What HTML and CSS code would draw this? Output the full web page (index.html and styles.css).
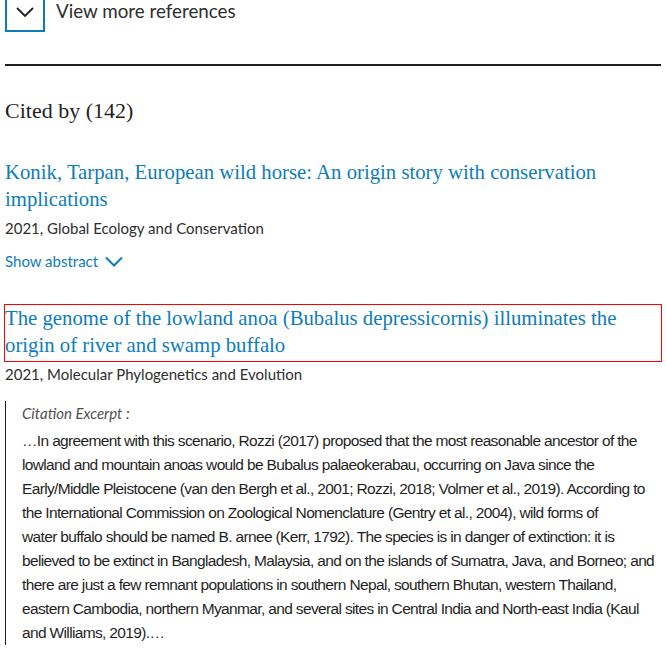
FILE: index.html
```html
<!DOCTYPE html>
<html>
<head>
<meta charset="utf-8">
<link rel="stylesheet" href="styles.css">
</head>
<body>
<div class="page">
  <div class="more">
    <button class="more-btn" aria-label="View more references">
      <svg width="18" height="10" viewBox="0 0 18 10"><path d="M1 1 L9 9 L17 1" fill="none" stroke="#1f1f1f" stroke-width="1.8"/></svg>
    </button>
    <span class="more-label">View more references</span>
  </div>
  <hr class="rule">
  <h2 class="cited">Cited by (142)</h2>
  <ul class="list">
    <li class="item">
      <a class="title" href="#">Konik, Tarpan, European wild horse: An origin story with conservation implications</a>
      <div class="meta">2021, Global Ecology and Conservation</div>
      <div class="abstract">Show abstract
        <svg width="18" height="11" viewBox="0 0 18 11"><path d="M1 1.5 L9 9.5 L17 1.5" fill="none" stroke="#0c7dbb" stroke-width="2"/></svg>
      </div>
    </li>
    <li class="item">
      <a class="title focused" href="#">The genome of the lowland anoa (Bubalus depressicornis) illuminates the origin of river and swamp buffalo</a>
      <div class="meta">2021, Molecular Phylogenetics and Evolution</div>
      <blockquote class="excerpt">
        <div class="ex-label">Citation Excerpt :</div>
        <p class="ex-text">…In agreement with this scenario, Rozzi (2017) proposed that the most reasonable ancestor of the<br>lowland and mountain anoas would be Bubalus palaeokerabau, occurring on Java since the<br>Early/Middle Pleistocene (van den Bergh et al., 2001; Rozzi, 2018; Volmer et al., 2019). According to<br>the International Commission on Zoological Nomenclature (Gentry et al., 2004), wild forms of<br>water buffalo should be named B. arnee (Kerr, 1792). The species is in danger of extinction: it is<br>believed to be extinct in Bangladesh, Malaysia, and on the islands of Sumatra, Java, and Borneo; and<br>there are just a few remnant populations in southern Nepal, southern Bhutan, western Thailand,<br>eastern Cambodia, northern Myanmar, and several sites in Central India and North-east India (Kaul<br>and Williams, 2019).…</p>
      </blockquote>
    </li>
  </ul>
</div>
</body>
</html>
```

FILE: styles.css
```css
html, body {
  margin: 0;
  padding: 0;
  background: #ffffff;
}
.page {
  width: 656px;
  padding-left: 5px;
  font-family: "Lato", "Noto Sans", sans-serif;
  color: #2e2e2e;
}
.more {
  display: flex;
  align-items: center;
  gap: 11px;
  margin-top: -9px;
}
.more-btn {
  width: 40px;
  height: 41px;
  box-sizing: border-box;
  border: 2px solid #0c7dbb;
  background: #fff;
  display: flex;
  align-items: center;
  justify-content: center;
  padding: 0;
  flex: none;
}
.more-label {
  font-size: 18.8px;
  color: #2e2e2e;
  margin-top: -2px;
}
.rule {
  border: 0;
  border-top: 2px solid #1f1f1f;
  margin: 32px 0 0 0;
}
.cited {
  font-family: "Liberation Serif", serif;
  font-weight: normal;
  font-size: 22px;
  color: #1f1f1f;
  margin: 30px 0 0 0;
  line-height: 30px;
}
.list {
  list-style: none;
  margin: 0;
  padding: 0;
}
.item {
  margin-top: 33px;
}
.item + .item {
  margin-top: 35px;
}
.title {
  display: block;
  font-family: "Liberation Serif", serif;
  font-size: 20.75px;
  line-height: 27px;
  padding-bottom: 2px;
  color: #0c7dbb;
  text-decoration: none;
}
.focused {
  outline: 1px solid #ff0000;
}
.meta {
  font-size: 15px;
  line-height: 20px;
  margin-top: 3px;
  color: #2e2e2e;
}
.abstract {
  font-size: 15px;
  color: #0c7dbb;
  margin-top: 14px;
  display: flex;
  align-items: center;
  gap: 7px;
}
.excerpt {
  margin: 17px 0 0 0;
  border-left: 1px solid #1f1f1f;
  padding: 2px 0 0 16px;
}
.ex-label {
  font-style: italic;
  font-size: 15px;
  color: #505050;
  line-height: 20px;
}
.ex-text {
  margin: 6px 0 0 0;
  font-family: "Liberation Sans", sans-serif;
  font-size: 15.5px;
  letter-spacing: -0.65px;
  line-height: 24px;
  white-space: nowrap;
  color: #1f1f1f;
}
```
